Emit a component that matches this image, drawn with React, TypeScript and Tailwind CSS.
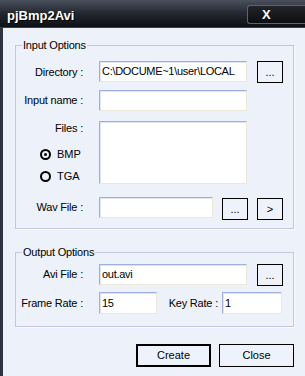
import React from "react";

const font = "font-['Liberation_Sans',Arial,sans-serif]";
const inputCls =
  "h-[21px] bg-white border border-[#ebe8d8] border-t-[#9fb0e0] border-l-[#9fb0e0] shadow-[inset_1px_1px_0_#dde4f6] px-[2px] text-[11px] tracking-[-0.3px] text-black flex items-center whitespace-nowrap overflow-hidden";
const btnCls =
  "h-[22px] w-[26px] border border-black bg-[#eef2fa] flex items-center justify-center text-[11px] text-black";

function Label({ children }: { children: React.ReactNode }) {
  return (
    <div className="w-[83px] pr-[16px] text-right text-[11px] tracking-[-0.2px] text-black leading-[13px] whitespace-nowrap">
      {children}
    </div>
  );
}

function Group({ title, className, children }: { title: string; className?: string; children: React.ReactNode }) {
  return (
    <div className={`w-[279px] border border-[#bfc8dc] shadow-[1px_1px_0_#f8faff] ${className ?? ""}`}>
      <div className="-mt-[7px] ml-[6px] w-fit px-[1px] bg-[#ecf1fa] text-[11px] tracking-[-0.2px] leading-[13px] text-black">
        {title}
      </div>
      {children}
    </div>
  );
}

function Radio({ label, checked }: { label: string; checked?: boolean }) {
  return (
    <div className="flex items-center h-[13px] pl-[24px]">
      <div className="w-[11px] h-[11px] rounded-full border-2 border-black flex items-center justify-center">
        {checked && <div className="w-[3px] h-[3px] rounded-full bg-black" />}
      </div>
      <span className="ml-[6px] text-[11px] leading-[13px] text-black">{label}</span>
    </div>
  );
}

export default function App() {
  return (
    <div className={`w-[305px] h-[376px] flex flex-col bg-[#ecf1fa] overflow-hidden ${font}`}>
      {/* title bar */}
      <div className="h-[28px] flex items-start bg-gradient-to-b from-[#4a505c] via-[#23272f] to-[#0e1015] border-b border-[#3a404c]">
        <span className="ml-[7px] mt-[8px] text-[13px] font-bold leading-[16px] text-white [text-shadow:1px_1px_0_#000]">
          pjBmp2Avi
        </span>
        <div className="ml-auto mt-[5px] h-[19px] w-[58px] rounded-l-[3px] border border-[#5c6372] border-r-0 bg-gradient-to-b from-[#222429] to-[#0d0e11] flex items-center pl-[14px]">
          <span className="text-[13px] font-bold leading-none text-white">X</span>
        </div>
      </div>

      {/* body */}
      <div className="flex-1 border-l-[3px] border-[#2e3442] pl-[12px]">
        <Group title="Input Options" className="mt-[17px] h-[184px]">
          <div className="mt-[9px] flex items-center h-[22px]">
            <Label>Directory :</Label>
            <div className={`${inputCls} w-[148px] self-start`}>C:\DOCUME~1\user\LOCAL</div>
            <div className={`${btnCls} ml-[10px]`}>...</div>
          </div>
          <div className="mt-[7px] flex items-center h-[21px]">
            <Label>Input name :</Label>
            <div className={`${inputCls} w-[148px]`} />
          </div>
          <div className="mt-[10px] flex items-start">
            <div className="w-[83px] flex flex-col">
              <div className="mt-[1px]">
                <Label>Files :</Label>
              </div>
              <div className="mt-[13px]">
                <Radio label="BMP" checked />
              </div>
              <div className="mt-[9px]">
                <Radio label="TGA" />
              </div>
            </div>
            <div className={`${inputCls} w-[148px] h-[63px]`} />
          </div>
          <div className="mt-[13px] flex items-start">
            <div className="h-[21px] flex items-center">
              <Label>Wav File :</Label>
            </div>
            <div className={`${inputCls} w-[114px]`} />
            <div className={`${btnCls} ml-[9px] mt-[1px]`}>...</div>
            <div className={`${btnCls} ml-[9px] mt-[1px]`}>&gt;</div>
          </div>
        </Group>

        <Group title="Output Options" className="mt-[23px] h-[75px]">
          <div className="mt-[5px] flex items-start">
            <div className="h-[21px] flex items-center">
              <Label>Avi File :</Label>
            </div>
            <div className={`${inputCls} w-[148px]`}>out.avi</div>
            <div className={`${btnCls} ml-[10px]`}>...</div>
          </div>
          <div className="mt-[6px] flex items-center h-[22px]">
            <Label>Frame Rate :</Label>
            <div className={`${inputCls} w-[58px] h-[22px]`}>15</div>
            <div className="w-[65px] pr-[4px] text-right text-[11px] tracking-[-0.2px] text-black whitespace-nowrap">
              Key Rate :
            </div>
            <div className={`${inputCls} w-[60px] h-[22px]`}>1</div>
          </div>
        </Group>

        <div className="mt-[17px] w-[279px] flex justify-end gap-[8px]">
          <div className="h-[23px] w-[75px] border-2 border-black bg-[#eef2fa] flex items-center justify-center text-[11px] text-black">
            Create
          </div>
          <div className="h-[23px] w-[75px] border border-black bg-[#eef2fa] flex items-center justify-center text-[11px] text-black">
            Close
          </div>
        </div>
      </div>
    </div>
  );
}
